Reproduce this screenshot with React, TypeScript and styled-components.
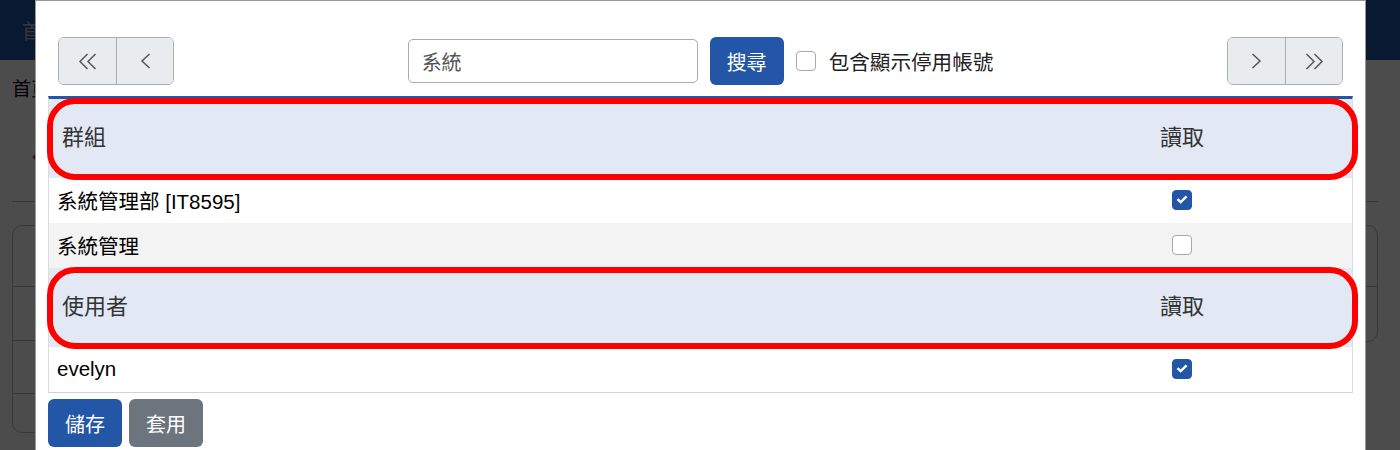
import React, { useState } from 'react';
import styled, { createGlobalStyle, css } from 'styled-components';

const GlobalStyle = createGlobalStyle`
  html, body {
    margin: 0;
    padding: 0;
    background: #ffffff;
    font-family: "Liberation Sans", "Noto Sans CJK TC", sans-serif;
    color: #212529;
  }
  * { box-sizing: border-box; }
`;

const primary = '#2456a8';

type Row = { name: string; read: boolean };

const groups: Row[] = [
  { name: '系統管理部 [IT8595]', read: true },
  { name: '系統管理', read: false },
];

const users: Row[] = [{ name: 'evelyn', read: true }];

const DoubleLeft = () => (
  <svg width="20" height="17" viewBox="0 0 20 17" fill="none" stroke="#555" strokeWidth="1.5">
    <path d="M9.5 1 L2 8.5 L9.5 16 M17.5 1 L10 8.5 L17.5 16" />
  </svg>
);

const SingleLeft = () => (
  <svg width="12" height="16" viewBox="0 0 12 16" fill="none" stroke="#555" strokeWidth="1.5">
    <path d="M10.5 1 L3 8 L10.5 15" />
  </svg>
);

const SingleRight = () => (
  <svg width="12" height="16" viewBox="0 0 12 16" fill="none" stroke="#555" strokeWidth="1.5">
    <path d="M1.5 1 L9 8 L1.5 15" />
  </svg>
);

const DoubleRight = () => (
  <svg width="20" height="17" viewBox="0 0 20 17" fill="none" stroke="#555" strokeWidth="1.5">
    <path d="M2.5 1 L10 8.5 L2.5 16 M10.5 1 L18 8.5 L10.5 16" />
  </svg>
);

const CheckMark = () => (
  <svg width="12" height="9" viewBox="0 0 12 9" fill="none" stroke="#fff" strokeWidth="2.4">
    <path d="M1.5 4.2 L4.6 7.2 L10.6 1.4" />
  </svg>
);

const App: React.FC = () => {
  const [keyword, setKeyword] = useState('系統');
  const [showDisabled, setShowDisabled] = useState(false);

  return (
    <>
      <GlobalStyle />
      <Page>
        <NavBar>
          <NavItem>首頁</NavItem>
        </NavBar>
        <PageContent>
          <Breadcrumb>首頁</Breadcrumb>
          <PagerHint>‹</PagerHint>
          <Divider />
          <CardRow>
            <Card>
              <CardLine height={61} />
              <CardLine height={54} />
              <CardLine height={53} />
              <CardLine height={38} last />
            </Card>
            <Card>
              <CardLine height={61} />
              <CardLine height={54} last />
            </Card>
          </CardRow>
        </PageContent>
      </Page>

      <Overlay>
        <Modal>
          <ModalBody>
            <Toolbar>
              <PagerGroup>
                <PagerButton><DoubleLeft /></PagerButton>
                <PagerButton><SingleLeft /></PagerButton>
              </PagerGroup>

              <SearchGroup>
                <SearchInput value={keyword} onChange={(e) => setKeyword(e.target.value)} />
                <ActionButton>搜尋</ActionButton>
                <CheckLabel onClick={() => setShowDisabled(!showDisabled)}>
                  <Check checked={showDisabled}>{showDisabled && <CheckMark />}</Check>
                  包含顯示停用帳號
                </CheckLabel>
              </SearchGroup>

              <PagerGroup>
                <PagerButton><SingleRight /></PagerButton>
                <PagerButton><DoubleRight /></PagerButton>
              </PagerGroup>
            </Toolbar>

            <PermTable>
              <HeaderRow>
                <span>群組</span>
                <CenterCell>讀取</CenterCell>
              </HeaderRow>
              {groups.map((g, i) => (
                <DataRow key={g.name} striped={i % 2 === 1}>
                  <span>{g.name}</span>
                  <CenterCell>
                    <Check checked={g.read}>{g.read && <CheckMark />}</Check>
                  </CenterCell>
                </DataRow>
              ))}
              <HeaderRow>
                <span>使用者</span>
                <CenterCell>讀取</CenterCell>
              </HeaderRow>
              {users.map((u, i) => (
                <DataRow key={u.name} striped={i % 2 === 1}>
                  <span>{u.name}</span>
                  <CenterCell>
                    <Check checked={u.read}>{u.read && <CheckMark />}</Check>
                  </CenterCell>
                </DataRow>
              ))}
            </PermTable>

            <Footer>
              <ActionButton>儲存</ActionButton>
              <ActionButton variant="secondary">套用</ActionButton>
            </Footer>
          </ModalBody>
        </Modal>
      </Overlay>
    </>
  );
};

export default App;

/* underlying page (dimmed by the overlay) */

const Page = styled.div`
  width: 1400px;
  height: 450px;
  overflow: hidden;
`;

const NavBar = styled.div`
  height: 60px;
  background: ${primary};
  display: flex;
  align-items: center;
  padding: 0 22px;
`;

const NavItem = styled.span`
  font-size: 20px;
  color: rgba(255, 255, 255, 0.6);
`;

const PageContent = styled.div`
  padding: 0 12px;
`;

const Breadcrumb = styled.div`
  margin-top: 16px;
  font-size: 19px;
  line-height: 28px;
  color: #000;
`;

const PagerHint = styled.div`
  margin: 40px 0 0 20px;
  height: 40px;
  font-size: 20px;
  color: #333;
`;

const Divider = styled.div`
  margin-top: 17px;
  border-top: 1px solid #bbb;
  margin-right: 10px;
`;

const CardRow = styled.div`
  display: flex;
  align-items: flex-start;
  gap: 24px;
  margin-top: 23px;
  padding-right: 10px;
`;

const Card = styled.div`
  flex: 1;
  border: 1px solid #bbb;
  border-radius: 10px;
`;

const CardLine = styled.div<{ height: number; last?: boolean }>`
  height: ${({ height }) => height}px;
  border-bottom: ${({ last }) => (last ? 'none' : '1px solid #bbb')};
`;

/* modal */

const Overlay = styled.div`
  position: fixed;
  inset: 0;
  background: rgba(0, 0, 0, 0.7);
  overflow: hidden;
`;

const Modal = styled.div`
  width: 1331px;
  margin-left: 35px;
  background: #fff;
  border: 1px solid rgba(0, 0, 0, 0.4);
`;

const ModalBody = styled.div`
  padding: 36px 12px 12px;
`;

const Toolbar = styled.div`
  display: flex;
  align-items: center;
  justify-content: space-between;
  height: 48px;
  padding: 0 10px;
  margin-bottom: 11px;
`;

const PagerGroup = styled.div`
  display: flex;
  border: 1px solid #adadad;
  border-radius: 6px;
  overflow: hidden;
`;

const PagerButton = styled.button`
  width: 57px;
  height: 46px;
  display: flex;
  align-items: center;
  justify-content: center;
  background: #e9ecef;
  border: none;
  padding: 0;
  cursor: pointer;

  & + & {
    border-left: 1px solid #adadad;
  }
`;

const SearchGroup = styled.div`
  display: flex;
  align-items: center;
  gap: 12px;
`;

const SearchInput = styled.input`
  width: 290px;
  height: 44px;
  padding: 0 13px;
  border: 1px solid #ababab;
  border-radius: 5px;
  font-family: inherit;
  font-size: 20px;
  color: #555;
  outline: none;
`;

const ActionButton = styled.button<{ variant?: 'primary' | 'secondary' }>`
  height: 48px;
  padding: 0 17px;
  border: none;
  border-radius: 6px;
  font-family: inherit;
  font-size: 20px;
  color: #fff;
  background: ${({ variant }) => (variant === 'secondary' ? '#6c757d' : primary)};
  cursor: pointer;
`;

const CheckLabel = styled.label`
  display: flex;
  align-items: center;
  gap: 13px;
  font-size: 20.6px;
  color: #222;
  cursor: pointer;
`;

const Check = styled.span<{ checked: boolean }>`
  width: 20px;
  height: 20px;
  display: inline-flex;
  align-items: center;
  justify-content: center;
  border-radius: 4px;
  ${({ checked }) =>
    checked
      ? css`
          background: ${primary};
          border: 1px solid ${primary};
        `
      : css`
          background: #fff;
          border: 1px solid #a8a8a8;
        `}
`;

const PermTable = styled.div`
  border-top: 3px solid ${primary};
  border-left: 1px solid #dcdcdc;
  border-right: 1px solid #dcdcdc;
  border-bottom: 1px solid #d2d2d2;
`;

const rowGrid = css`
  display: grid;
  grid-template-columns: 1fr 340px;
  align-items: center;
`;

const HeaderRow = styled.div`
  ${rowGrid};
  position: relative;
  height: 79px;
  padding: 0 0 8px 13px;
  background: #e2e8f4;
  font-size: 22px;
  color: #333;

  /* red highlight drawn over the header row */
  &::after {
    content: '';
    position: absolute;
    left: -2px;
    right: -6px;
    top: -1px;
    bottom: -2px;
    border: 6px solid #ff0000;
    border-radius: 28px;
    pointer-events: none;
  }
`;

const DataRow = styled.div<{ striped: boolean }>`
  ${rowGrid};
  height: 45px;
  padding: 0 0 2px 8px;
  font-size: 20.5px;
  color: #000;
  background: ${({ striped }) => (striped ? '#f3f3f3' : '#fff')};
`;

const CenterCell = styled.span`
  display: flex;
  justify-content: center;
  align-items: center;
`;

const Footer = styled.div`
  display: flex;
  gap: 7px;
  margin-top: 6px;
`;
